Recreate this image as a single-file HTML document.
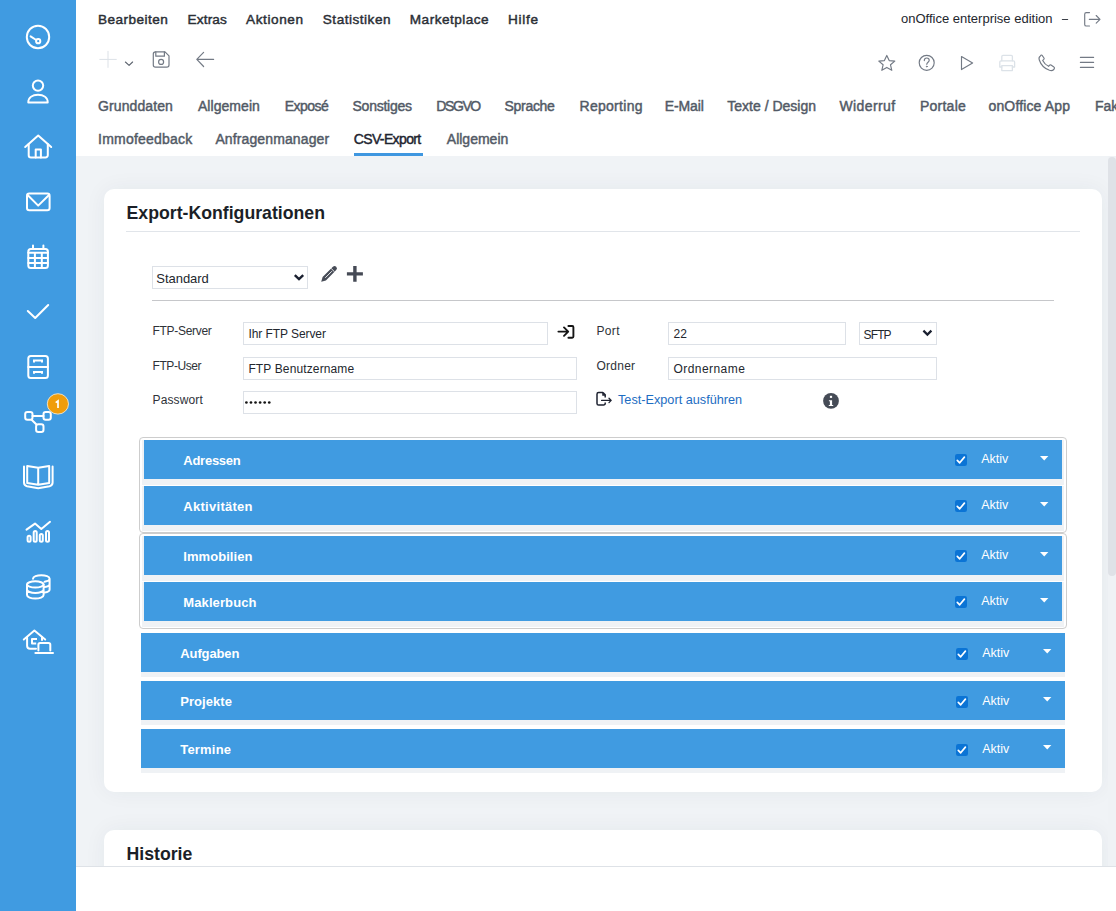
<!DOCTYPE html>
<html><head><meta charset="utf-8">
<style>
*{box-sizing:border-box;margin:0;padding:0}
html,body{width:1116px;height:911px;overflow:hidden;background:#fff;font-family:"Liberation Sans",sans-serif}
.a{position:absolute;white-space:nowrap}
#side{position:absolute;left:0;top:0;width:76px;height:911px;background:#409BE1}
#side svg{position:absolute;left:0;top:0}
.menu{font-size:13.6px;line-height:13.6px;font-weight:400;color:#2B2F36;-webkit-text-stroke:0.45px #2B2F36}
.tab{font-size:14px;line-height:14px;font-weight:400;color:#525A66;-webkit-text-stroke:0.45px #525A66}
.tab.act{color:#1E2430;-webkit-text-stroke:0.45px #1E2430}
#gray{position:absolute;left:76px;top:156px;width:1040px;height:710px;background:#F0F3F6}
.card{position:absolute;background:#fff;border-radius:10px;box-shadow:0 0 22px rgba(30,50,80,0.055)}
.title{font-size:17.7px;line-height:17.7px;font-weight:700;color:#1B1F27}
.lbl{font-size:12px;line-height:12px;color:#2E3238;letter-spacing:-0.3px}
.inp{position:absolute;border:1px solid #DDE1E7;background:#fff}
.itx{font-size:12px;line-height:12px;color:#23272E}
.grp{position:absolute;border:1px solid #CDCDCD;border-radius:4px;background:#fff}
.bar{position:absolute;background:#409BE1}
.strip{position:absolute;background:#EFF2F5}
.bt{font-size:13px;line-height:13px;font-weight:700;color:#fff;letter-spacing:-0.45px}
.ak{font-size:12.5px;line-height:12.5px;color:#fff}
</style></head><body>
<div id="side"><svg width="76" height="911" viewBox="0 0 76 911" fill="none" stroke="#fff" stroke-width="2" stroke-linecap="round" stroke-linejoin="round">
<!-- dashboard -->
<circle cx="38" cy="37" r="11.2"/>
<path d="M30.6 36.4 L36.2 40"/>
<circle cx="38.2" cy="41.2" r="2.1"/>
<!-- person -->
<circle cx="38" cy="85.6" r="5.2"/>
<path d="M28.3 102.6 C28.3 97.5 32.5 94.8 38 94.8 C43.5 94.8 47.7 97.5 47.7 102.6 Z"/>
<!-- house -->
<path d="M25.2 147 L38.2 135.6 L51.2 147"/>
<path d="M28.7 144 V155.2 a2.3 2.3 0 0 0 2.3 2.3 H45.5 a2.3 2.3 0 0 0 2.3 -2.3 V144"/>
<path d="M35.7 157.5 V149.4 H40.9 V157.5"/>
<!-- mail -->
<rect x="27" y="193.6" width="22.6" height="16.6" rx="2.3"/>
<path d="M27.6 195 L38.2 205.6 L49 195"/>
<!-- calendar -->
<rect x="28.3" y="248.9" width="19.6" height="19.1" rx="2.5"/>
<path d="M28.3 252.8 H47.9 M28.3 258 H47.9 M28.3 263.1 H47.9 M34.9 252.8 V268 M41.8 252.8 V268"/>
<path d="M33 245.5 V248.5 M43.4 245.5 V248.5"/>
<!-- check -->
<path d="M27.8 311 L35.2 318 L48.2 305"/>
<!-- drawers -->
<rect x="28.3" y="355.9" width="19.6" height="22" rx="2.5"/>
<path d="M28.3 367.1 H47.9"/>
<path d="M34 362.6 V360.6 H42 V362.6 M34 373.8 V371.9 H42 V373.8" stroke-linecap="butt" stroke-linejoin="miter"/>
<!-- workflow -->
<rect x="25.2" y="411.9" width="7.3" height="7.8" rx="2.2"/>
<rect x="43.5" y="411.9" width="7.3" height="7.8" rx="2.2"/>
<rect x="36.1" y="424.2" width="7.4" height="7.8" rx="2.2"/>
<path d="M32.5 416.1 H43.5 M31.6 419.7 L36.2 424.2"/>
<!-- book -->
<path d="M24 466.5 V482.5 Q24 485.5 27 486.2 L38.2 488.3 L49.5 486.2 Q52.6 485.5 52.6 482.5 V466.5"/>
<path d="M27.2 466 L38.2 467.8 L49.2 466 V482.9 L38.2 484.8 L27.2 482.9 Z M38.2 467.8 V484.8"/>
<!-- chart -->
<path d="M26.5 529.6 L35 523.6 L41.3 529 L50 521.8"/>
<rect x="27.6" y="535.7" width="3" height="6.1" rx="1.5"/>
<rect x="33.7" y="530.9" width="3" height="10.9" rx="1.5"/>
<rect x="39.8" y="534.1" width="3" height="7.7" rx="1.5"/>
<rect x="46" y="530.9" width="3" height="10.9" rx="1.5"/>
<!-- coins -->
<ellipse cx="35.3" cy="584.4" rx="8.3" ry="3.1"/>
<path d="M27 584.4 V595 C27 597 31 598.6 35.3 598.6 C39.6 598.6 43.6 597 43.6 595 V584.4 M27 589.6 C27 591.6 31 593 35.3 593 C39.6 593 43.6 591.6 43.6 589.6"/>
<path d="M33 578.7 C33 576.6 37 575.2 41.3 575.2 C45.6 575.2 49.6 576.6 49.6 578.7 V589.4 C49.6 590.8 47.5 592 44.6 592.5 M44.6 581.7 C47.5 581.2 49.6 580 49.6 578.7 M44.6 587.1 C47.5 586.6 49.6 585.4 49.6 584"/>
<!-- house laptop -->
<path d="M23.8 639.5 L34.4 630.6 L45.2 639.5"/>
<path d="M27.1 637.4 V645.7 Q27.1 648.7 30.1 648.7 H36"/>
<path d="M42 637 V640"/>
<path d="M37 638.9 H32 V643.4 H36.2" stroke-linecap="butt"/>
<path d="M38.4 650.6 V644.8 Q38.4 643 40.2 643 H48.5 Q50.3 643 50.3 644.8 V650.6"/>
<path d="M35.4 653 H53"/>
</svg>
<svg style="position:absolute;left:0;top:0;overflow:visible" width="1" height="1"><ellipse cx="57.9" cy="403.9" rx="10.6" ry="10.2" fill="#F09D0B" stroke="#FBE6C2" stroke-width="0.9"/><path d="M55.7 402.6 L58 400.9 V408.1" fill="none" stroke="#fff" stroke-width="1.7" stroke-linejoin="miter"/></svg></div>

<!-- top menu -->
<div class="a" style="left:901px;top:11.9px;font-size:13px;line-height:13px;color:#23272E">onOffice enterprise edition</div>


<!-- toolbar icons -->
<svg class="a" style="left:0;top:0" width="1116" height="80" viewBox="0 0 1116 80" fill="none" stroke-linecap="round" stroke-linejoin="round">
<path d="M108 51.3 V67.4 M99.8 59.4 H116.3" stroke="#DCE1E7" stroke-width="1"/>
<path d="M125.4 62 L129.1 65.4 L132.6 62" stroke="#5C636E" stroke-width="1.1"/>
<path d="M155.5 51.8 H165 L169 55.8 V65 a2.2 2.2 0 0 1 -2.2 2.2 H155.5 a2.2 2.2 0 0 1 -2.2 -2.2 V54 a2.2 2.2 0 0 1 2.2 -2.2 Z" stroke="#737A85" stroke-width="1.2"/>
<path d="M155.8 51.8 V56.2 H164.4 V51.8" stroke="#737A85" stroke-width="1.2"/>
<circle cx="161.1" cy="61.9" r="2.5" stroke="#737A85" stroke-width="1.2"/>
<path d="M213.6 59.4 H197 M203.6 52.4 L196.8 59.4 L203.6 66.5" stroke="#737A85" stroke-width="1.2"/>
<!-- star -->
<path d="M886.8 55.4 L889.2 60.6 L894.8 61.1 L890.5 64.8 L891.8 70.3 L886.8 67.4 L881.8 70.3 L883.1 64.8 L878.8 61.1 L884.4 60.6 Z" stroke="#737A85" stroke-width="1.15"/>
<!-- help -->
<circle cx="926.7" cy="62.8" r="7.5" stroke="#737A85" stroke-width="1.15"/>
<path d="M924.3 60.6 C924.3 58.8 925.4 58 926.8 58 C928.3 58 929.2 59 929.2 60.3 C929.2 62.2 926.8 62.2 926.8 64.3" stroke="#737A85" stroke-width="1.15"/>
<circle cx="926.8" cy="66.6" r="0.5" fill="#737A85" stroke="#737A85" stroke-width="0.8"/>
<!-- play -->
<path d="M961.5 56.5 V69.6 L972.6 62.9 Z" stroke="#737A85" stroke-width="1.15"/>
<!-- print -->
<path d="M1001.8 60.8 V56.5 a1.2 1.2 0 0 1 1.2 -1.2 H1011.2 a1.2 1.2 0 0 1 1.2 1.2 V60.8" stroke="#DCE2E8" stroke-width="1.3"/>
<path d="M1001.8 67 H999.8 V62 a1.2 1.2 0 0 1 1.2 -1.2 H1013.4 a1.2 1.2 0 0 1 1.2 1.2 V67 H1012.4" stroke="#DCE2E8" stroke-width="1.3"/>
<rect x="1001.8" y="65.6" width="10.6" height="5" stroke="#DCE2E8" stroke-width="1.3"/>
<!-- phone -->
<path d="M1040.2 56.3 C1039 57 1038.8 58.5 1039.3 60 C1040.8 64.5 1044.5 68.6 1049.5 70.3 C1051.2 70.8 1052.8 70.5 1053.8 69.5 L1054.4 68.4 C1054.6 67.8 1054.4 67.3 1053.9 67 L1051 65 C1050.5 64.7 1050 64.8 1049.6 65.2 L1048.6 66.3 C1046 65 1044 63 1042.7 60.4 L1043.8 59.4 C1044.2 59 1044.3 58.5 1044 58 L1042.1 55.4 C1041.8 55 1041.3 54.9 1040.9 55.2 Z" stroke="#737A85" stroke-width="1.15"/>
<!-- menu -->
<path d="M1080.4 57.4 H1093.6 M1080.4 62.4 H1093.6 M1080.4 67.4 H1093.6" stroke="#737A85" stroke-width="1.15"/>
<!-- logout -->
<path d="M1089.5 12.6 H1086.3 a1.6 1.6 0 0 0 -1.6 1.6 V24.4 a1.6 1.6 0 0 0 1.6 1.6 H1089.5" stroke="#737A85" stroke-width="1.15"/>
<path d="M1089.3 19.3 H1100 M1096.2 15.5 L1100 19.3 L1096.2 23.1" stroke="#737A85" stroke-width="1.15"/>
<path d="M1062.4 19.5 H1067.6" stroke="#3A3F47" stroke-width="1.2"/>
</svg>

<!-- menu -->
<div class="a menu" style="left:98.1px;top:12.6px;letter-spacing:0.433px">Bearbeiten</div>
<div class="a menu" style="left:187.4px;top:12.6px;letter-spacing:0.2px">Extras</div>
<div class="a menu" style="left:246.1px;top:12.6px;letter-spacing:0.571px">Aktionen</div>
<div class="a menu" style="left:322.8px;top:12.6px;letter-spacing:0.5px">Statistiken</div>
<div class="a menu" style="left:409.8px;top:12.6px;letter-spacing:0.48px">Marketplace</div>
<div class="a menu" style="left:508.1px;top:12.6px;letter-spacing:0.675px">Hilfe</div>
<!-- tabs -->
<div class="a tab" style="left:98.1px;top:99.45px;letter-spacing:0.089px">Grunddaten</div>
<div class="a tab" style="left:197.9px;top:99.45px;letter-spacing:0.062px">Allgemein</div>
<div class="a tab" style="left:284.8px;top:99.45px;letter-spacing:-0.54px">Exposé</div>
<div class="a tab" style="left:352.5px;top:99.45px;letter-spacing:-0.237px">Sonstiges</div>
<div class="a tab" style="left:436.3px;top:99.45px;letter-spacing:-1.4px">DSGVO</div>
<div class="a tab" style="left:504.6px;top:99.45px;letter-spacing:-0.317px">Sprache</div>
<div class="a tab" style="left:579.5px;top:99.45px;letter-spacing:0.287px">Reporting</div>
<div class="a tab" style="left:664.7px;top:99.45px;letter-spacing:-0.12px">E-Mail</div>
<div class="a tab" style="left:727.3px;top:99.45px;letter-spacing:0px">Texte / Design</div>
<div class="a tab" style="left:839.5px;top:99.45px;letter-spacing:0.386px">Widerruf</div>
<div class="a tab" style="left:920.0px;top:99.45px;letter-spacing:0.233px">Portale</div>
<div class="a tab" style="left:988.5px;top:99.45px;letter-spacing:0.145px">onOffice App</div>
<div class="a tab" style="left:1094.9px;top:99.45px;letter-spacing:0px">Fak</div>
<div class="a tab" style="left:98.1px;top:132.35px;letter-spacing:0.209px">Immofeedback</div>
<div class="a tab" style="left:215.4px;top:132.35px;letter-spacing:0.121px">Anfragenmanager</div>
<div class="a tab act" style="left:353.7px;top:132.35px;letter-spacing:-0.622px">CSV-Export</div>
<div class="a tab" style="left:446.8px;top:132.35px;letter-spacing:0.0px">Allgemein</div>
<div class="a" style="left:354px;top:153px;width:69px;height:3px;background:#3F97E0"></div>

<div id="gray"></div>
<div class="card" style="left:104px;top:189px;width:998px;height:603px"></div>
<div class="card" style="left:104px;top:830px;width:998px;height:60px"></div>

<div class="a title" style="left:126.5px;top:204.7px">Export-Konfigurationen</div>
<div class="a" style="left:126px;top:231px;width:954px;height:1px;background:#E1E5EA"></div>


<!-- config select row -->
<div class="inp" style="left:152px;top:266px;width:156px;height:23px"></div>
<div class="a itx" style="left:156.3px;top:271.8px;font-size:13px;line-height:13px;letter-spacing:-0.04px">Standard</div>
<svg class="a" style="left:0;top:0;overflow:visible" width="1" height="1" fill="none">
<path d="M294.8 275.2 L299 279.2 L303.2 275.2" stroke="#1A2030" stroke-width="2.4" stroke-linecap="butt"/>
<!-- pencil -->
<path d="M321.2 281.8 L322.6 277.1 L332.9 266.8 A2.3 2.3 0 0 1 336.2 270.1 L325.9 280.4 Z" fill="#474C57"/>
<path d="M325.3 277.8 L331.9 271.2 M331.2 268.5 L334.5 271.8" stroke="#fff" stroke-width="0.9"/>
<path d="M346.9 273.9 H362.9 M354.9 266 V281.8" stroke="#454A55" stroke-width="3.4"/>
<!-- login arrow -->
<path d="M558.4 331.6 H568 M564 327.4 L568.2 331.6 L564 335.8" stroke="#151515" stroke-width="1.9" stroke-linecap="round" stroke-linejoin="round"/>
<path d="M568.4 326 H572.2 a1.2 1.2 0 0 1 1.2 1.2 V336.6 a1.2 1.2 0 0 1 -1.2 1.2 H568.4" stroke="#151515" stroke-width="1.9" stroke-linecap="round"/>
<!-- test export icon -->
<path d="M603 392.6 H598.6 a1.6 1.6 0 0 0 -1.6 1.6 V403.4 a1.6 1.6 0 0 0 1.6 1.6 H603.6 a1.6 1.6 0 0 0 1.6 -1.6 V402.6 M603 392.6 L605.2 394.8 V397.6" stroke="#1E2230" stroke-width="1.5" stroke-linejoin="round"/>
<path d="M603 392.6 V395 H605.2" stroke="#1E2230" stroke-width="1.5"/>
<path d="M601.6 400.4 H611 M609 398.2 L611.2 400.4 L609 402.6" stroke="#1E2230" stroke-width="1.3" stroke-linecap="round" stroke-linejoin="round"/>
<!-- info -->
<circle cx="831" cy="400.9" r="7.9" fill="#454B56"/>
<rect x="829.9" y="395.8" width="2.2" height="2.1" fill="#fff"/>
<path d="M828.9 400.2 H832.1 V405 H833.2 V406.1 H828.8 V405 H829.9 V401.3 H828.9 Z" fill="#fff"/>
</svg>
<div class="a" style="left:152px;top:300px;width:902px;height:1px;background:#C6C7CA"></div>

<!-- form -->
<div class="a lbl" style="left:152.5px;top:325.1px">FTP-Server</div>
<div class="a lbl" style="left:152.5px;top:359.5px;letter-spacing:-0.42px">FTP-User</div>
<div class="a lbl" style="left:152.5px;top:393.9px;letter-spacing:0.14px">Passwort</div>
<div class="inp" style="left:243px;top:322px;width:305px;height:23px"></div>
<div class="inp" style="left:243px;top:357px;width:334px;height:23px"></div>
<div class="inp" style="left:243px;top:391px;width:334px;height:23px"></div>
<div class="a itx" style="left:248.4px;top:327.8px;letter-spacing:-0.07px">Ihr FTP Server</div>
<div class="a itx" style="left:248.4px;top:362.7px;letter-spacing:0.13px">FTP Benutzername</div>
<svg class="a" style="left:0;top:0;overflow:visible" width="1" height="1" fill="#141414"><circle cx="246.40" cy="402.5" r="1.35"/><circle cx="250.97" cy="402.5" r="1.35"/><circle cx="255.54" cy="402.5" r="1.35"/><circle cx="260.11" cy="402.5" r="1.35"/><circle cx="264.68" cy="402.5" r="1.35"/><circle cx="269.25" cy="402.5" r="1.35"/></svg>
<div class="a lbl" style="left:596.5px;top:325.1px;letter-spacing:0.33px">Port</div>
<div class="a lbl" style="left:596.5px;top:360px;letter-spacing:0.24px">Ordner</div>
<div class="inp" style="left:668px;top:322px;width:178px;height:23px"></div>
<div class="inp" style="left:859px;top:322px;width:78px;height:23px"></div>
<div class="inp" style="left:668px;top:357px;width:269px;height:23px"></div>
<div class="a itx" style="left:673.5px;top:327.6px">22</div>
<div class="a itx" style="left:673.5px;top:362.9px;letter-spacing:0.44px">Ordnername</div>
<div class="a itx" style="left:863.6px;top:329.3px;letter-spacing:-0.9px">SFTP</div>
<svg class="a" style="left:0;top:0;overflow:visible" width="1" height="1" fill="none">
<path d="M923.4 330.6 L927.4 334.6 L931.4 330.6" stroke="#1A2030" stroke-width="2.2"/>
</svg>
<div class="a" style="left:618px;top:393.85px;font-size:12.7px;line-height:12.7px;color:#1D6DC2">Test-Export ausführen</div>

<!-- bars -->
<div class="grp" style="left:139px;top:437px;width:928px;height:96px"></div>
<div class="grp" style="left:139px;top:533px;width:928px;height:96px"></div>
<div class="strip" style="left:142px;top:440px;width:922px;height:45px"></div>
<div class="bar" style="left:144px;top:440px;width:918px;height:39px"></div>
<div class="a bt" style="left:183.3px;top:454.3px;letter-spacing:-0.26px">Adressen</div>
<svg class="a" style="left:955px;top:454px" width="12" height="12" viewBox="0 0 12 12"><rect x="0" y="0" width="12" height="12" rx="2.2" fill="#0B74D5"/><path d="M2.3 6.4 L4.7 8.8 L9.4 3.1" fill="none" stroke="#fff" stroke-width="1.7" stroke-linecap="round" stroke-linejoin="round"/></svg>
<div class="a ak" style="left:981.2px;top:452.82px">Aktiv</div>
<svg class="a" style="left:1039.8px;top:455.8px" width="9" height="5" viewBox="0 0 9 5"><path d="M0 0 H8.4 L4.2 4.4 Z" fill="#fff"/></svg>
<div class="strip" style="left:142px;top:486px;width:922px;height:45px"></div>
<div class="bar" style="left:144px;top:486px;width:918px;height:39px"></div>
<div class="a bt" style="left:183.3px;top:500.3px;letter-spacing:0.28px">Aktivitäten</div>
<svg class="a" style="left:955px;top:500px" width="12" height="12" viewBox="0 0 12 12"><rect x="0" y="0" width="12" height="12" rx="2.2" fill="#0B74D5"/><path d="M2.3 6.4 L4.7 8.8 L9.4 3.1" fill="none" stroke="#fff" stroke-width="1.7" stroke-linecap="round" stroke-linejoin="round"/></svg>
<div class="a ak" style="left:981.2px;top:498.82px">Aktiv</div>
<svg class="a" style="left:1039.8px;top:501.8px" width="9" height="5" viewBox="0 0 9 5"><path d="M0 0 H8.4 L4.2 4.4 Z" fill="#fff"/></svg>
<div class="strip" style="left:142px;top:536px;width:922px;height:45px"></div>
<div class="bar" style="left:144px;top:536px;width:918px;height:39px"></div>
<div class="a bt" style="left:183.3px;top:550.3px;letter-spacing:0.05px">Immobilien</div>
<svg class="a" style="left:955px;top:550px" width="12" height="12" viewBox="0 0 12 12"><rect x="0" y="0" width="12" height="12" rx="2.2" fill="#0B74D5"/><path d="M2.3 6.4 L4.7 8.8 L9.4 3.1" fill="none" stroke="#fff" stroke-width="1.7" stroke-linecap="round" stroke-linejoin="round"/></svg>
<div class="a ak" style="left:981.2px;top:548.8199999999999px">Aktiv</div>
<svg class="a" style="left:1039.8px;top:551.8px" width="9" height="5" viewBox="0 0 9 5"><path d="M0 0 H8.4 L4.2 4.4 Z" fill="#fff"/></svg>
<div class="strip" style="left:142px;top:582px;width:922px;height:45px"></div>
<div class="bar" style="left:144px;top:582px;width:918px;height:39px"></div>
<div class="a bt" style="left:183.3px;top:596.3px;letter-spacing:0.1px">Maklerbuch</div>
<svg class="a" style="left:955px;top:596px" width="12" height="12" viewBox="0 0 12 12"><rect x="0" y="0" width="12" height="12" rx="2.2" fill="#0B74D5"/><path d="M2.3 6.4 L4.7 8.8 L9.4 3.1" fill="none" stroke="#fff" stroke-width="1.7" stroke-linecap="round" stroke-linejoin="round"/></svg>
<div class="a ak" style="left:981.2px;top:594.8199999999999px">Aktiv</div>
<svg class="a" style="left:1039.8px;top:597.8px" width="9" height="5" viewBox="0 0 9 5"><path d="M0 0 H8.4 L4.2 4.4 Z" fill="#fff"/></svg>
<div class="strip" style="left:141px;top:672px;width:924px;height:5px"></div>
<div class="bar" style="left:141px;top:633px;width:924px;height:39px"></div>
<div class="a bt" style="left:180.3px;top:647px;letter-spacing:-0.12px">Aufgaben</div>
<svg class="a" style="left:956px;top:648px" width="12" height="12" viewBox="0 0 12 12"><rect x="0" y="0" width="12" height="12" rx="2.2" fill="#0B74D5"/><path d="M2.3 6.4 L4.7 8.8 L9.4 3.1" fill="none" stroke="#fff" stroke-width="1.7" stroke-linecap="round" stroke-linejoin="round"/></svg>
<div class="a ak" style="left:982.2px;top:647.12px">Aktiv</div>
<svg class="a" style="left:1043px;top:649px" width="9" height="5" viewBox="0 0 9 5"><path d="M0 0 H8.4 L4.2 4.4 Z" fill="#fff"/></svg>
<div class="strip" style="left:141px;top:720px;width:924px;height:5px"></div>
<div class="bar" style="left:141px;top:681px;width:924px;height:39px"></div>
<div class="a bt" style="left:180.3px;top:695px;letter-spacing:0.04px">Projekte</div>
<svg class="a" style="left:956px;top:696px" width="12" height="12" viewBox="0 0 12 12"><rect x="0" y="0" width="12" height="12" rx="2.2" fill="#0B74D5"/><path d="M2.3 6.4 L4.7 8.8 L9.4 3.1" fill="none" stroke="#fff" stroke-width="1.7" stroke-linecap="round" stroke-linejoin="round"/></svg>
<div class="a ak" style="left:982.2px;top:695.12px">Aktiv</div>
<svg class="a" style="left:1043px;top:697px" width="9" height="5" viewBox="0 0 9 5"><path d="M0 0 H8.4 L4.2 4.4 Z" fill="#fff"/></svg>
<div class="strip" style="left:141px;top:768px;width:924px;height:5px"></div>
<div class="bar" style="left:141px;top:729px;width:924px;height:39px"></div>
<div class="a bt" style="left:180.3px;top:743px;letter-spacing:0.18px">Termine</div>
<svg class="a" style="left:956px;top:744px" width="12" height="12" viewBox="0 0 12 12"><rect x="0" y="0" width="12" height="12" rx="2.2" fill="#0B74D5"/><path d="M2.3 6.4 L4.7 8.8 L9.4 3.1" fill="none" stroke="#fff" stroke-width="1.7" stroke-linecap="round" stroke-linejoin="round"/></svg>
<div class="a ak" style="left:982.2px;top:743.12px">Aktiv</div>
<svg class="a" style="left:1043px;top:745px" width="9" height="5" viewBox="0 0 9 5"><path d="M0 0 H8.4 L4.2 4.4 Z" fill="#fff"/></svg>

<div class="a title" style="left:126.5px;top:846.1px">Historie</div>

<!-- footer -->
<div class="a" style="left:76px;top:866px;width:1040px;height:45px;background:#fff;border-top:1px solid #DEE2E7"></div>
<!-- scrollbar -->
<div class="a" style="left:1108px;top:156px;width:8px;height:710px;background:#EFF2F5"></div>
<div class="a" style="left:1108px;top:157px;width:8px;height:419px;background:#DFE2E7;border-radius:4px"></div>
</body></html>
